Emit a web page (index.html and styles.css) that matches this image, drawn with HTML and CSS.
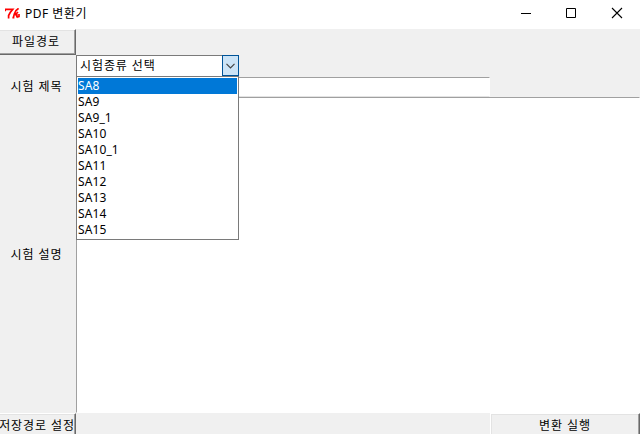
FILE: index.html
```
<!DOCTYPE html>
<html lang="ko">
<head>
<meta charset="utf-8">
<title>PDF 변환기</title>
<link rel="stylesheet" href="styles.css">
</head>
<body>
<div class="window">
  <header class="titlebar">
    <svg class="logo" width="16" height="12" viewBox="0 0 16 12" fill="none" stroke="#ff0000" stroke-width="1.7">
      <path d="M.2 3.2V1.3H7.8L5.2 4.5 3.6 7.5V10.4"/>
      <path d="M13.6.4 11 2.5 9.3 6 8.4 9.6M13 4 10.2 6.8M10.4 6.2 13.4 9.6M14 6v3.2M7.4 9.6h2M11.8 6v3.5"/>
    </svg>
    <h1 class="title">PDF 변환기</h1>
    <div class="controls">
      <svg width="46" height="29" viewBox="0 0 46 29"><path d="M17 13.5h10" stroke="#000"/></svg>
      <svg width="46" height="29" viewBox="0 0 46 29"><path d="M16.5 8.5h9v9h-9z" fill="none" stroke="#000"/></svg>
      <svg width="46" height="29" viewBox="0 0 46 29"><path d="m16 8 10 10M26 8 16 18" stroke="#000" stroke-width="1.1"/></svg>
    </div>
  </header>
  <main class="form">
    <button class="button path-button"><span>파일경로</span></button>
    <div class="combo">
      <div class="combo-value"><span>시험종류 선택</span></div>
      <div class="combo-arrow"><svg width="9" height="6" viewBox="0 0 9 6"><path d="m.5.8 4 4 4-4" fill="none" stroke="#444" stroke-width="1.2"/></svg></div>
      <ul class="options">
        <li class="selected">SA8</li>
        <li>SA9</li>
        <li>SA9_1</li>
        <li>SA10</li>
        <li>SA10_1</li>
        <li>SA11</li>
        <li>SA12</li>
        <li>SA13</li>
        <li>SA14</li>
        <li>SA15</li>
      </ul>
    </div>
    <div class="label title-label"><span>시험 제목</span></div>
    <div class="entry"></div>
    <div class="label text-label"><span>시험 설명</span></div>
    <div class="textarea"></div>
    <button class="button save-button"><span>저장경로 설정</span></button>
    <button class="button run-button"><span>변환 실행</span></button>
  </main>
</div>
</body>
</html>
```
FILE: styles.css
```
* { box-sizing: border-box; }
body {
  margin: 0;
  font: 12px/16px "Noto Sans", "Noto Sans CJK KR", sans-serif;
  letter-spacing: 0.9px;
  color: #000;
  overflow: hidden;
}
.window { width: 640px; height: 434px; overflow: hidden; background: #f0f0f0; }
.titlebar { display: flex; height: 29px; background: #fff; padding-left: 5px; }
.logo { margin-top: 8px; }
.title {
  margin: 6px 0 0 4px;
  font-size: 12px;
  font-weight: 400;
  line-height: 16px;
  letter-spacing: 0.5px;
  white-space: nowrap;
}
.controls { display: flex; margin: 0 -2px 0 auto; }
.form {
  display: grid;
  grid-template-columns: 76px 414px 150px;
  grid-template-rows: 26px 22px 20px 316px 26px;
}
.button {
  display: flex;
  justify-content: center;
  align-items: center;
  padding: 0;
  font: inherit;
  letter-spacing: inherit;
  color: inherit;
  white-space: nowrap;
  background: #f0f0f0;
  border: 1px solid;
  border-color: #fff #696969 #696969 #fff;
  box-shadow: inset -1px -1px #a0a0a0, inset 1px 1px #e3e3e3;
  overflow: hidden;
}
.path-button { grid-area: 1 / 1; border-left-width: 0; box-shadow: inset -1px -1px #a0a0a0, inset 0 1px #e3e3e3; padding-right: 3px; }
.save-button { grid-area: 5 / 1; border-left-width: 0; box-shadow: inset -1px -1px #a0a0a0, inset 0 1px #e3e3e3; padding-right: 1px; }
.run-button { grid-area: 5 / 3; }
.combo {
  grid-area: 2 / 2;
  position: relative;
  display: flex;
  width: 163px;
  height: 22px;
}
.combo-value {
  flex: 1;
  padding: 2px 0 0 3px;
  border: 1px solid #7a7a7a;
  border-right: 0;
  background: #fff;
  white-space: nowrap;
}
.combo-arrow {
  display: flex;
  align-items: center;
  justify-content: center;
  width: 17px;
  height: 21px;
  background: #cce4f7;
  border: 1px solid #005499;
}
.options {
  position: absolute;
  z-index: 1;
  top: 21px;
  left: 0;
  width: 163px;
  height: 164px;
  margin: 0;
  padding: 1px;
  list-style: none;
  letter-spacing: 0.1px;
  background: #fff;
  border: 1px solid #7a7a7a;
}
.options li { height: 16px; line-height: 16px; }
.options .selected { background: #0078d7; color: #fff; }
.label { display: flex; align-items: center; justify-content: center; padding-right: 3px; white-space: nowrap; }
.title-label { grid-area: 3 / 1; }
.text-label { grid-area: 4 / 1; }
.entry {
  grid-area: 3 / 2;
  background: #fff;
  border: 1px solid;
  border-color: #a0a0a0 #fff #e3e3e3 #a0a0a0;
}
.textarea {
  grid-area: 4 / 2 / 5 / 4;
  background: #fff;
  border: 1px solid;
  border-color: #a0a0a0 #fff #fff #a0a0a0;
}
```
